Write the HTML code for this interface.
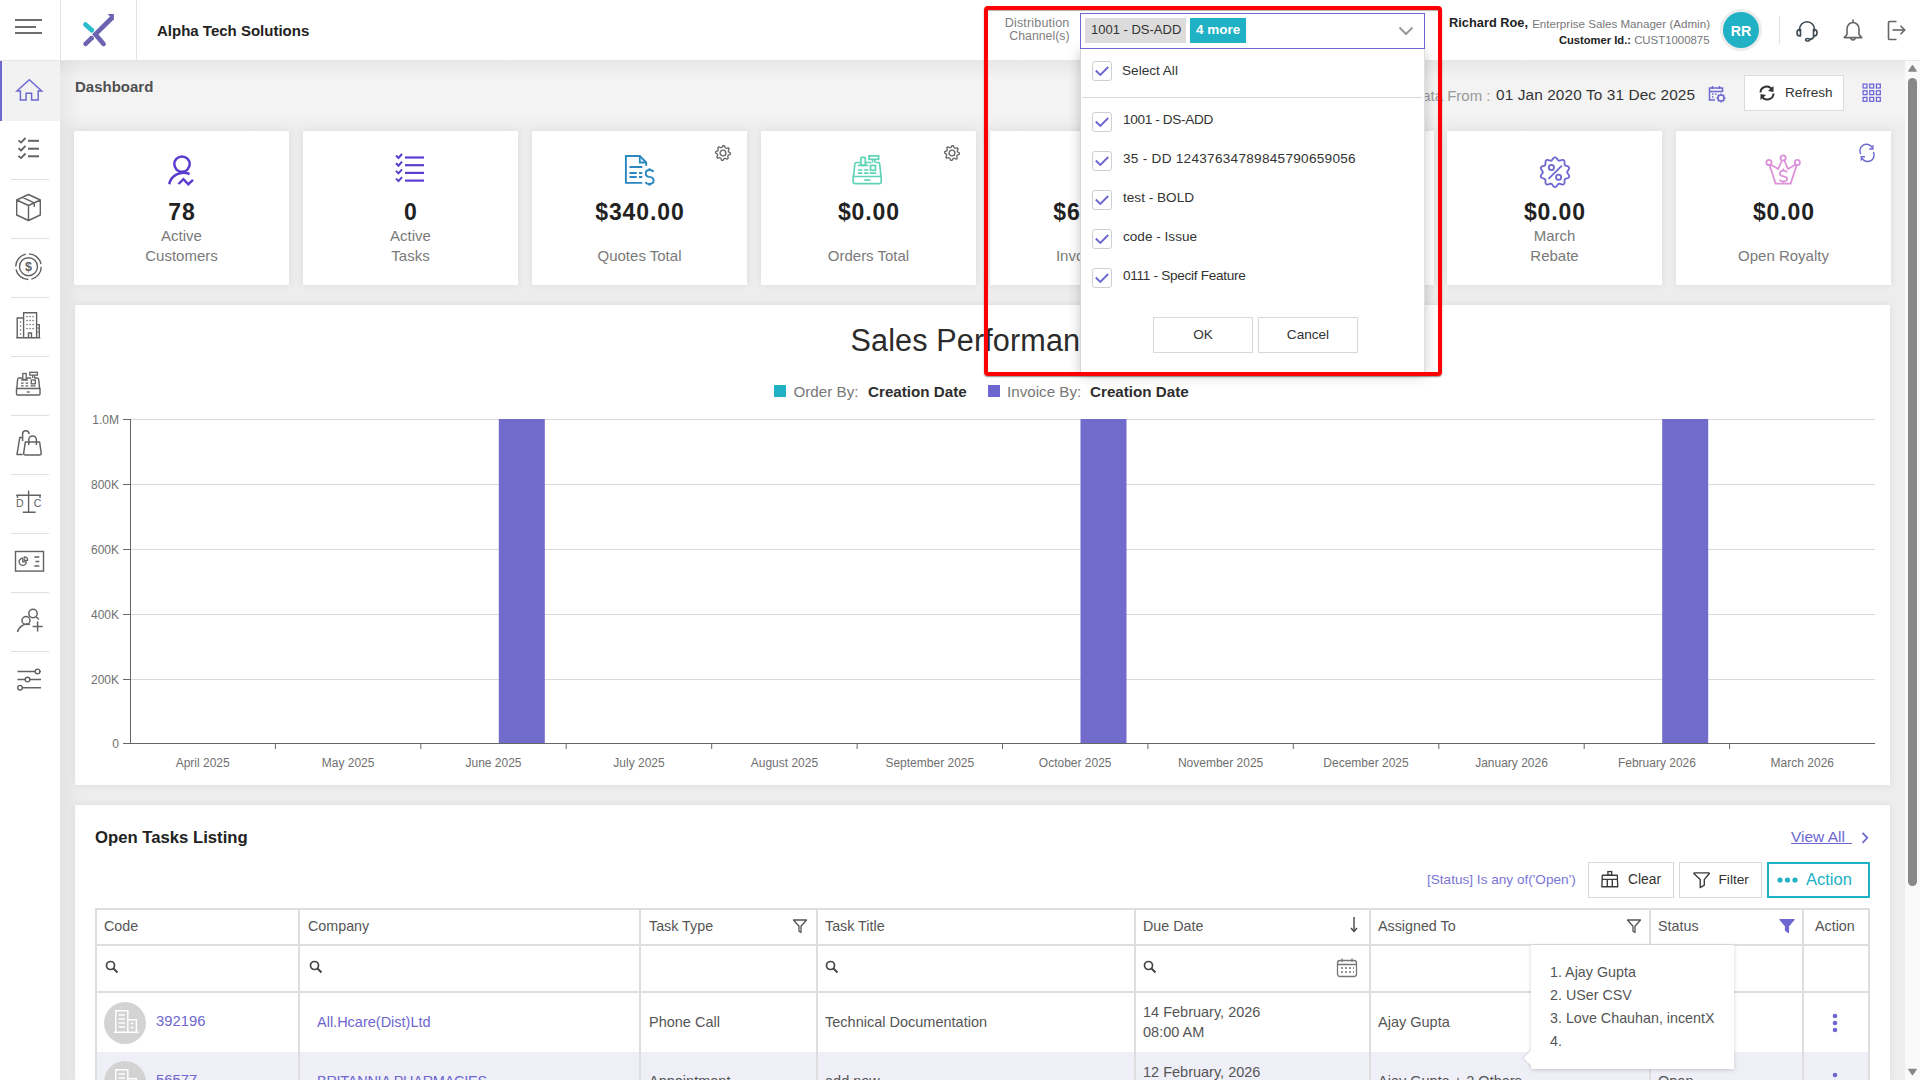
<!DOCTYPE html><html><head><meta charset="utf-8"><style>
html,body{margin:0;padding:0;width:1920px;height:1080px;overflow:hidden;background:#f1f1f1;font-family:"Liberation Sans", sans-serif;}
.t{position:absolute;line-height:1;white-space:nowrap;}
</style></head><body>
<div style="position:absolute;left:61px;top:60px;width:1844px;height:1020px;background:#ededed;"></div>
<div style="position:absolute;left:60px;top:61px;width:1845px;height:70px;background:linear-gradient(#e8e8e8 0px,#f3f3f3 18px,#f3f3f3 52px,#ececec 70px);"></div>
<div style="position:absolute;left:0px;top:0px;width:1920px;height:61px;background:#fff;border-bottom:1px solid #e6e6e6;box-sizing:border-box;"></div>
<div style="position:absolute;left:60px;top:0px;width:1px;height:60px;background:#e4e4e4;"></div>
<div style="position:absolute;left:136px;top:0px;width:1px;height:60px;background:#e4e4e4;"></div>
<div style="position:absolute;left:15px;top:19px;width:27px;height:2px;background:#6e6e6e;"></div>
<div style="position:absolute;left:15px;top:26px;width:21px;height:2px;background:#6e6e6e;"></div>
<div style="position:absolute;left:15px;top:32px;width:27px;height:2px;background:#6e6e6e;"></div>
<svg style="position:absolute;left:80px;top:10px;" width="40" height="40" viewBox="0 0 40 40">
<line x1="5.4" y1="14.5" x2="11.9" y2="20.3" stroke="#2bbccc" stroke-width="4.6" stroke-linecap="round"/>
<line x1="11.9" y1="20.3" x2="12.5" y2="20.8" stroke="#2bbccc" stroke-width="4.6"/>
<line x1="5.6" y1="33.9" x2="11.6" y2="28.2" stroke="#6c63b0" stroke-width="4.6" stroke-linecap="round"/>
<line x1="11.6" y1="28.2" x2="12.4" y2="27.4" stroke="#6c63b0" stroke-width="4.6"/>
<polyline points="23.6,33.9 15.3,24.3 31.3,8.5" fill="none" stroke="#6c63b0" stroke-width="4.6" stroke-linecap="round" stroke-linejoin="miter"/>
<polygon points="27.6,3.9 33.9,3.9 33.9,10.6" fill="#6c63b0"/>
</svg>
<div class="t" style="left:157px;top:22.80px;font-size:15px;color:#222;font-weight:bold;">Alpha Tech Solutions</div>
<div class="t" style="right:392px;text-align:right;top:17.41px;font-size:12.8px;color:#222;font-weight:bold;">Richard Roe,</div>
<div class="t" style="right:210px;text-align:right;top:18.43px;font-size:11.6px;color:#777;font-weight:normal;">Enterprise Sales Manager (Admin)</div>
<div class="t" style="right:289px;text-align:right;top:34.77px;font-size:11.2px;color:#222;font-weight:bold;">Customer Id.:</div>
<div class="t" style="right:210.5px;text-align:right;top:34.60px;font-size:11.4px;color:#777;font-weight:normal;">CUST1000875</div>
<div style="position:absolute;left:1720px;top:9px;width:42px;height:42px;border-radius:50%;background:#ececec;"></div>
<div style="position:absolute;left:1723px;top:12px;width:36px;height:36px;border-radius:50%;background:#21b1c5;"></div>
<div class="t" style="left:1141px;width:1200px;text-align:center;top:23.88px;font-size:14.2px;color:#fff;font-weight:bold;">RR</div>
<div style="position:absolute;left:1779px;top:16px;width:1px;height:28px;background:#e0e0e0;"></div>
<svg style="position:absolute;left:1795px;top:18px;" width="24" height="26" viewBox="0 0 24 26">
<path d="M4.5 13.5 V11.5 A7.5 7.8 0 0 1 19.5 11.5 V13.5" fill="none" stroke="#3d4a52" stroke-width="1.6"/>
<path d="M5.5 11.5 H4.5 A2.5 3.2 0 0 0 4.5 17.9 H5.5 Z" fill="none" stroke="#3d4a52" stroke-width="1.6" stroke-linejoin="round"/>
<path d="M18.5 11.5 H19.5 A2.5 3.2 0 0 1 19.5 17.9 H18.5 Z" fill="none" stroke="#3d4a52" stroke-width="1.6" stroke-linejoin="round"/>
<path d="M19 18 Q18.5 21 14.5 21.6" fill="none" stroke="#3d4a52" stroke-width="1.6"/>
<ellipse cx="12.6" cy="21.8" rx="2" ry="1.3" fill="none" stroke="#3d4a52" stroke-width="1.5"/>
</svg>
<svg style="position:absolute;left:1842px;top:17px;" width="22" height="26" viewBox="0 0 22 26">
<path d="M5 17.5 V12 A6 6.5 0 0 1 17 12 V17.5 L19.8 20.6 H2.2 Z" fill="none" stroke="#666" stroke-width="1.6" stroke-linejoin="round"/>
<path d="M9 21 A2 2 0 0 0 13 21" fill="none" stroke="#666" stroke-width="1.6"/>
<line x1="11" y1="2.5" x2="11" y2="5.5" stroke="#666" stroke-width="1.6"/>
</svg>
<svg style="position:absolute;left:1886px;top:19px;" width="22" height="22" viewBox="0 0 22 22">
<path d="M10.5 2.5 H3.5 Q2.5 2.5 2.5 3.5 V19.5 Q2.5 20.5 3.5 20.5 H10.5" fill="none" stroke="#666" stroke-width="1.6"/>
<line x1="6.5" y1="11" x2="18.5" y2="11" stroke="#666" stroke-width="1.6"/>
<polyline points="14.5,6.8 18.7,11 14.5,15.2" fill="none" stroke="#666" stroke-width="1.6"/>
</svg>
<div style="position:absolute;left:0px;top:61px;width:60px;height:1019px;background:#fff;"></div>
<div style="position:absolute;left:0px;top:61px;width:60px;height:60px;background:#f2f2f2;"></div>
<div style="position:absolute;left:0px;top:61px;width:2px;height:60px;background:#6d67cf;"></div>
<div style="position:absolute;left:11px;top:179px;width:38px;height:1px;background:#e0e0e0;"></div>
<div style="position:absolute;left:11px;top:238px;width:38px;height:1px;background:#e0e0e0;"></div>
<div style="position:absolute;left:11px;top:297px;width:38px;height:1px;background:#e0e0e0;"></div>
<div style="position:absolute;left:11px;top:356px;width:38px;height:1px;background:#e0e0e0;"></div>
<div style="position:absolute;left:11px;top:415px;width:38px;height:1px;background:#e0e0e0;"></div>
<div style="position:absolute;left:11px;top:474px;width:38px;height:1px;background:#e0e0e0;"></div>
<div style="position:absolute;left:11px;top:533px;width:38px;height:1px;background:#e0e0e0;"></div>
<div style="position:absolute;left:11px;top:592px;width:38px;height:1px;background:#e0e0e0;"></div>
<div style="position:absolute;left:11px;top:651px;width:38px;height:1px;background:#e0e0e0;"></div>
<svg style="position:absolute;left:0px;top:60px;" width="60" height="660" viewBox="0 0 60 660"><path d="M16.9 31 L29.3 19.799999999999997 L41.7 31 H38.2 V40 H31.6 V33.3 H26.1 V40 H20.4 V31 Z" fill="none" stroke="#6d67cf" stroke-width="1.45" stroke-linejoin="miter"/><polyline points="18.5,80.30000000000001 21,82.60000000000002 25.5,78.0" fill="none" stroke="#626262" stroke-width="1.8" stroke-linejoin="round"/><line x1="28" y1="80.80000000000001" x2="39" y2="80.80000000000001" stroke="#626262" stroke-width="2"/><polyline points="18.5,88.19999999999999 21,90.5 25.5,85.89999999999998" fill="none" stroke="#626262" stroke-width="1.8" stroke-linejoin="round"/><line x1="28" y1="88.69999999999999" x2="39" y2="88.69999999999999" stroke="#626262" stroke-width="2"/><polyline points="18.5,95.80000000000001 21,98.10000000000002 25.5,93.5" fill="none" stroke="#626262" stroke-width="1.8" stroke-linejoin="round"/><line x1="28" y1="96.30000000000001" x2="39" y2="96.30000000000001" stroke="#626262" stroke-width="2"/><path d="M28.5 134.5 L40.3 140 V155 L28.5 160.5 L16.7 155 V140 Z M16.7 140 L28.5 145.5 L40.3 140 M28.5 145.5 V160.5 M22.5 137.3 L34.3 142.8 V147" fill="none" stroke="#626262" stroke-width="1.4" stroke-linejoin="round"/><circle cx="28.5" cy="206.7" r="12.8" fill="none" stroke="#626262" stroke-width="1.4" stroke-dasharray="17 3.1"/><circle cx="28.5" cy="206.7" r="9" fill="none" stroke="#626262" stroke-width="1.4"/><text x="28.5" y="211.3" font-size="12.5" font-weight="bold" text-anchor="middle" fill="#626262" font-family="Liberation Sans">$</text><path d="M17.2 277.5 V258 H23.6 M23.6 277.5 V252.8 H36.6 V277.5 M36.6 264.6 H39.3 V277.5 M16.2 277.8 H40.3 M28.5 277.5 V273 H31.5 V277.5" fill="none" stroke="#626262" stroke-width="1.4"/><rect x="26.4" y="255.9" width="1.3" height="1.3" fill="#626262"/><rect x="26.4" y="259.9" width="1.3" height="1.3" fill="#626262"/><rect x="26.4" y="263.9" width="1.3" height="1.3" fill="#626262"/><rect x="26.4" y="267.9" width="1.3" height="1.3" fill="#626262"/><rect x="29.4" y="255.9" width="1.3" height="1.3" fill="#626262"/><rect x="29.4" y="259.9" width="1.3" height="1.3" fill="#626262"/><rect x="29.4" y="263.9" width="1.3" height="1.3" fill="#626262"/><rect x="29.4" y="267.9" width="1.3" height="1.3" fill="#626262"/><rect x="32.4" y="255.9" width="1.3" height="1.3" fill="#626262"/><rect x="32.4" y="259.9" width="1.3" height="1.3" fill="#626262"/><rect x="32.4" y="263.9" width="1.3" height="1.3" fill="#626262"/><rect x="32.4" y="267.9" width="1.3" height="1.3" fill="#626262"/><rect x="19.9" y="261.4" width="1.3" height="1.3" fill="#626262"/><rect x="19.9" y="265.4" width="1.3" height="1.3" fill="#626262"/><rect x="19.9" y="269.4" width="1.3" height="1.3" fill="#626262"/><rect x="19.9" y="273.4" width="1.3" height="1.3" fill="#626262"/><rect x="37.4" y="267.4" width="1.3" height="1.3" fill="#626262"/><rect x="37.4" y="271.4" width="1.3" height="1.3" fill="#626262"/><path d="M16.8 328.5 L17.6 319.5 Q17.8 318 19.3 318 H22.5 M26.5 318 H31.2 M34.2 318 H37 Q38.5 318 38.7 319.5 L39.6 328.5" fill="none" stroke="#626262" stroke-width="1.4"/><path d="M16.5 328.5 H40 V333.8 Q40 335 38.8 335 H17.7 Q16.5 335 16.5 333.8 Z" fill="none" stroke="#626262" stroke-width="1.4"/><path d="M26.7 332 H29.8" stroke="#626262" stroke-width="1.3"/><rect x="22.8" y="313.5" width="3.4" height="6" fill="none" stroke="#626262" stroke-width="1.3"/><path d="M21 320 H28" stroke="#626262" stroke-width="1.3"/><rect x="29.8" y="312.3" width="7.6" height="2.8" fill="none" stroke="#626262" stroke-width="1.3"/><path d="M32.6 315 V318 M34.6 315 V318" stroke="#626262" stroke-width="1.2"/><rect x="31.3" y="320" width="4" height="3.8" fill="none" stroke="#626262" stroke-width="1.3"/><path d="M21 323.2 H23.6 M25.6 323.2 H28.2 M21 325.8 H23.6 M25.6 325.8 H28.2 M30.6 325.8 H35.6" stroke="#626262" stroke-width="1.3"/><path d="M22.5 377.5 H19.8 L17 394.5 H22.6" fill="none" stroke="#626262" stroke-width="1.5" stroke-linejoin="round"/><path d="M22.6 381 V374 A3.2 3.2 0 0 1 29 374" fill="none" stroke="#626262" stroke-width="1.5"/><path d="M25.3 382 H39.6 L41.2 393 Q41.4 395 39.4 395 H25.5 Q23.5 395 23.7 393 Z" fill="none" stroke="#626262" stroke-width="1.5" stroke-linejoin="round"/><path d="M28.8 385 V379.8 A3.8 3.8 0 0 1 36.4 379.8 V385" fill="none" stroke="#626262" stroke-width="1.5"/><path d="M28.6 430.5 V452.20000000000005 M22.8 452.20000000000005 H35.6 M16.2 435.3 H41 M17.5 435.3 V438 M40 435.3 V438" fill="none" stroke="#626262" stroke-width="1.4"/><text x="19.8" y="447.3" font-size="10.5" text-anchor="middle" fill="#626262" font-family="Liberation Sans">D</text><text x="37.5" y="447.3" font-size="10.5" text-anchor="middle" fill="#626262" font-family="Liberation Sans">C</text><rect x="15.5" y="491.5" width="28" height="19.6" fill="none" stroke="#626262" stroke-width="1.4"/><path d="M26.3 501.79999999999995 A3.6 3.6 0 1 1 22.7 498.20000000000005 V501.79999999999995 Z" fill="none" stroke="#626262" stroke-width="1.3" stroke-linejoin="round"/><path d="M24.2 496.79999999999995 A3.5 3.5 0 0 1 27.7 500.29999999999995 H24.2 Z" fill="none" stroke="#626262" stroke-width="1.2" stroke-linejoin="round"/><path d="M34.3 497 H39.3 M35.5 501.5 H39.3 M34.3 506 H39.3" stroke="#626262" stroke-width="1.3"/><circle cx="33" cy="553.5" r="4.2" fill="none" stroke="#626262" stroke-width="1.5"/><circle cx="26" cy="560.5" r="4" fill="none" stroke="#626262" stroke-width="1.5"/><path d="M17.5 572 A10 10 0 0 1 30 564.5" fill="none" stroke="#626262" stroke-width="1.5"/><path d="M36 557.2 A6.5 6.5 0 0 1 38.8 559.5" fill="none" stroke="#626262" stroke-width="1.4"/><path d="M37.6 561.5 V571.5 M32.6 566.5 H42.6" stroke="#626262" stroke-width="1.5"/><path d="M17.5 611.4 H35.2 M17.5 619.6 H25.2 M29.8 619.6 H41 M22.3 627.7 H41" stroke="#626262" stroke-width="1.5"/><circle cx="37.5" cy="611.4" r="2.3" fill="none" stroke="#626262" stroke-width="1.4"/><circle cx="27.5" cy="619.6" r="2.3" fill="none" stroke="#626262" stroke-width="1.4"/><circle cx="20" cy="627.7" r="2.3" fill="none" stroke="#626262" stroke-width="1.4"/><path d="M39.8 611.4 H41" stroke="#626262" stroke-width="1.5"/></svg>
<div class="t" style="left:75px;top:79.30px;font-size:15px;color:#505050;font-weight:bold;">Dashboard</div>
<div class="t" style="right:429.5px;text-align:right;top:87.60px;font-size:15px;color:#999;font-weight:normal;">Data From :</div>
<div class="t" style="left:1496px;top:87.26px;font-size:15.4px;color:#333;font-weight:normal;letter-spacing:0.1px;">01 Jan 2020 To 31 Dec 2025</div>
<svg style="position:absolute;left:1707px;top:84px;" width="20" height="20" viewBox="0 0 20 20">
<path d="M8 16 H2.5 V4 H15.5 V8" fill="none" stroke="#6d67cf" stroke-width="1.5"/>
<path d="M2.5 7.5 H15.5" stroke="#6d67cf" stroke-width="1.5"/>
<path d="M5.5 2 V5 M12.5 2 V5" stroke="#6d67cf" stroke-width="1.5"/>
<path d="M5 10 h1.5 M8 10 h1.5 M5 13 h1.5" stroke="#6d67cf" stroke-width="1.3"/>
<circle cx="14" cy="14" r="3" fill="none" stroke="#6d67cf" stroke-width="1.5"/>
<path d="M14 9.5 V11 M14 17 V18.5 M9.5 14 H11 M17 14 H18.5 M10.8 10.8 L11.8 11.8 M16.2 16.2 L17.2 17.2 M10.8 17.2 L11.8 16.2 M16.2 11.8 L17.2 10.8" stroke="#6d67cf" stroke-width="1.5"/>
</svg>
<div style="position:absolute;left:1744px;top:75px;width:100px;height:36px;background:#fff;border:1px solid #dcdcdc;box-sizing:border-box;"></div>
<svg style="position:absolute;left:1758px;top:85px;" width="18" height="16" viewBox="0 0 18 16">
<path d="M2.5 7.5 A6.2 6.2 0 0 1 14 4.5" fill="none" stroke="#333" stroke-width="2"/>
<polygon points="15.5,1 15.5,7 10,6" fill="#333"/>
<path d="M15.5 8.5 A6.2 6.2 0 0 1 4 11.5" fill="none" stroke="#333" stroke-width="2"/>
<polygon points="2.5,15 2.5,9 8,10" fill="#333"/>
</svg>
<div class="t" style="left:1785px;top:85.99px;font-size:13.6px;color:#333;font-weight:normal;">Refresh</div>
<svg style="position:absolute;left:1862.4px;top:83.4px;" width="20" height="20" viewBox="0 0 20 20"><rect x="1.1" y="1.1" width="3.9" height="3.9" fill="none" stroke="#6a64d8" stroke-width="1.25"/><rect x="7.75" y="1.1" width="3.9" height="3.9" fill="none" stroke="#6a64d8" stroke-width="1.25"/><rect x="14.4" y="1.1" width="3.9" height="3.9" fill="none" stroke="#6a64d8" stroke-width="1.25"/><rect x="1.1" y="7.75" width="3.9" height="3.9" fill="none" stroke="#6a64d8" stroke-width="1.25"/><rect x="7.75" y="7.75" width="3.9" height="3.9" fill="none" stroke="#6a64d8" stroke-width="1.25"/><rect x="14.4" y="7.75" width="3.9" height="3.9" fill="none" stroke="#6a64d8" stroke-width="1.25"/><rect x="1.1" y="14.4" width="3.9" height="3.9" fill="none" stroke="#6a64d8" stroke-width="1.25"/><rect x="7.75" y="14.4" width="3.9" height="3.9" fill="none" stroke="#6a64d8" stroke-width="1.25"/><rect x="14.4" y="14.4" width="3.9" height="3.9" fill="none" stroke="#6a64d8" stroke-width="1.25"/></svg>
<div style="position:absolute;left:74px;top:131px;width:215px;height:154px;background:#fff;box-shadow:0 0 7px rgba(0,0,0,0.07);"></div>
<div style="position:absolute;left:303px;top:131px;width:215px;height:154px;background:#fff;box-shadow:0 0 7px rgba(0,0,0,0.07);"></div>
<div style="position:absolute;left:532px;top:131px;width:215px;height:154px;background:#fff;box-shadow:0 0 7px rgba(0,0,0,0.07);"></div>
<div style="position:absolute;left:761px;top:131px;width:215px;height:154px;background:#fff;box-shadow:0 0 7px rgba(0,0,0,0.07);"></div>
<div style="position:absolute;left:990px;top:131px;width:215px;height:154px;background:#fff;box-shadow:0 0 7px rgba(0,0,0,0.07);"></div>
<div style="position:absolute;left:1219px;top:131px;width:215px;height:154px;background:#fff;box-shadow:0 0 7px rgba(0,0,0,0.07);"></div>
<div style="position:absolute;left:1447px;top:131px;width:215px;height:154px;background:#fff;box-shadow:0 0 7px rgba(0,0,0,0.07);"></div>
<div style="position:absolute;left:1676px;top:131px;width:215px;height:154px;background:#fff;box-shadow:0 0 7px rgba(0,0,0,0.07);"></div>
<div class="t" style="left:-418.05px;width:1200px;text-align:center;top:200.53px;font-size:23px;color:#222;font-weight:bold;letter-spacing:0.9px;">78</div>
<div class="t" style="left:-418.5px;width:1200px;text-align:center;top:227.90px;font-size:15px;color:#7a7a7a;font-weight:normal;">Active</div>
<div class="t" style="left:-418.5px;width:1200px;text-align:center;top:247.90px;font-size:15px;color:#7a7a7a;font-weight:normal;">Customers</div>
<div class="t" style="left:-189.05px;width:1200px;text-align:center;top:200.53px;font-size:23px;color:#222;font-weight:bold;letter-spacing:0.9px;">0</div>
<div class="t" style="left:-189.5px;width:1200px;text-align:center;top:227.90px;font-size:15px;color:#7a7a7a;font-weight:normal;">Active</div>
<div class="t" style="left:-189.5px;width:1200px;text-align:center;top:247.90px;font-size:15px;color:#7a7a7a;font-weight:normal;">Tasks</div>
<div class="t" style="left:39.950000000000045px;width:1200px;text-align:center;top:200.53px;font-size:23px;color:#222;font-weight:bold;letter-spacing:0.9px;">$340.00</div>
<div class="t" style="left:39.5px;width:1200px;text-align:center;top:248.10px;font-size:15px;color:#7a7a7a;font-weight:normal;">Quotes Total</div>
<div class="t" style="left:268.95000000000005px;width:1200px;text-align:center;top:200.53px;font-size:23px;color:#222;font-weight:bold;letter-spacing:0.9px;">$0.00</div>
<div class="t" style="left:268.5px;width:1200px;text-align:center;top:248.10px;font-size:15px;color:#7a7a7a;font-weight:normal;">Orders Total</div>
<div class="t" style="left:497.95000000000005px;width:1200px;text-align:center;top:200.53px;font-size:23px;color:#222;font-weight:bold;letter-spacing:0.9px;">$670.00</div>
<div class="t" style="left:497.5px;width:1200px;text-align:center;top:248.10px;font-size:15px;color:#7a7a7a;font-weight:normal;">Invoice Total</div>
<div class="t" style="left:726.95px;width:1200px;text-align:center;top:200.53px;font-size:23px;color:#222;font-weight:bold;letter-spacing:0.9px;">$0.00</div>
<div class="t" style="left:726.5px;width:1200px;text-align:center;top:248.10px;font-size:15px;color:#7a7a7a;font-weight:normal;">Credit Total</div>
<div class="t" style="left:954.95px;width:1200px;text-align:center;top:200.53px;font-size:23px;color:#222;font-weight:bold;letter-spacing:0.9px;">$0.00</div>
<div class="t" style="left:954.5px;width:1200px;text-align:center;top:227.90px;font-size:15px;color:#7a7a7a;font-weight:normal;">March</div>
<div class="t" style="left:954.5px;width:1200px;text-align:center;top:247.90px;font-size:15px;color:#7a7a7a;font-weight:normal;">Rebate</div>
<div class="t" style="left:1183.95px;width:1200px;text-align:center;top:200.53px;font-size:23px;color:#222;font-weight:bold;letter-spacing:0.9px;">$0.00</div>
<div class="t" style="left:1183.5px;width:1200px;text-align:center;top:248.10px;font-size:15px;color:#7a7a7a;font-weight:normal;">Open Royalty</div>
<svg style="position:absolute;left:167px;top:154px;" width="32" height="34" viewBox="0 0 32 34">
<circle cx="15" cy="10.1" r="7.7" fill="none" stroke="#5a3ccf" stroke-width="2.5"/>
<path d="M2.3 30.3 A14.5 13.5 0 0 1 22.6 20" fill="none" stroke="#5a3ccf" stroke-width="2.5"/>
<polyline points="11.5,30 16.4,25.2 21.3,30.2 26,25.8" fill="none" stroke="#5a3ccf" stroke-width="2.4" stroke-linejoin="miter"/>
</svg>
<svg style="position:absolute;left:394.2px;top:153.3px;" width="32" height="32" viewBox="0 0 32 32"><polyline points="2,2.5 4.5,5.0 8,1.0" fill="none" stroke="#5a3ccf" stroke-width="2"/><line x1="11" y1="4.5" x2="30" y2="4.5" stroke="#5a3ccf" stroke-width="2.2"/><polyline points="2,10.2 4.5,12.7 8,8.7" fill="none" stroke="#5a3ccf" stroke-width="2"/><line x1="11" y1="12.2" x2="30" y2="12.2" stroke="#5a3ccf" stroke-width="2.2"/><polyline points="2,17.9 4.5,20.4 8,16.4" fill="none" stroke="#5a3ccf" stroke-width="2"/><line x1="11" y1="19.9" x2="30" y2="19.9" stroke="#5a3ccf" stroke-width="2.2"/><polyline points="2,25.6 4.5,28.1 8,24.1" fill="none" stroke="#5a3ccf" stroke-width="2"/><line x1="11" y1="27.6" x2="30" y2="27.6" stroke="#5a3ccf" stroke-width="2.2"/></svg>
<svg style="position:absolute;left:620px;top:150px;" width="40" height="40" viewBox="0 0 40 40">
<path d="M22.3 32.9 H5.9 V6 H19.8 L26.2 12.5 V15.7" fill="none" stroke="#2a87c0" stroke-width="1.9" stroke-linejoin="miter"/>
<path d="M19.8 6 V12.5 H26.2" fill="none" stroke="#2a87c0" stroke-width="1.8"/>
<path d="M9.5 17 H22.3 M9.5 23 H16.7 M19 23 H22.3 M9.5 27 H16.7 M19 27 H22.3" stroke="#2a87c0" stroke-width="1.8"/>
<path d="M29.5 18.3 V20 M29.5 34 V35.8" stroke="#2a87c0" stroke-width="1.9"/>
<path d="M33.3 21.8 Q32.6 20 29.5 20 Q25.7 20 25.7 23.4 Q25.7 26.3 29.5 26.9 Q33.6 27.4 33.6 30.6 Q33.6 34 29.5 34 Q26.2 34 25.4 32.2" fill="none" stroke="#2a87c0" stroke-width="1.9"/>
</svg>
<svg style="position:absolute;left:840px;top:145px;" width="60" height="50" viewBox="0 0 60 50">
<path d="M13.6 31.5 L14.8 19 Q15 17.5 16.5 17.5 H20.6 M25.6 17.5 H31.5 M35.5 17.5 H38 Q39.5 17.5 39.7 19 L41 31.5" fill="none" stroke="#5fd3b6" stroke-width="1.7"/>
<path d="M13.2 31.5 H41.2 V37 Q41.2 38.6 39.6 38.6 H14.8 Q13.2 38.6 13.2 37 Z" fill="none" stroke="#5fd3b6" stroke-width="1.7"/>
<path d="M25 35.2 H29.6" stroke="#5fd3b6" stroke-width="1.7" stroke-linecap="round"/>
<rect x="20.9" y="12.3" width="4.4" height="8" rx="0.8" fill="none" stroke="#5fd3b6" stroke-width="1.7"/>
<path d="M18.7 20.4 H27.6" stroke="#5fd3b6" stroke-width="1.7" stroke-linecap="round"/>
<rect x="29" y="10.9" width="9.6" height="3.4" fill="none" stroke="#5fd3b6" stroke-width="1.7"/>
<path d="M32.6 14.3 V17.5 M34.8 14.3 V17.5" stroke="#5fd3b6" stroke-width="1.5"/>
<rect x="30.5" y="20.5" width="5" height="4.8" fill="none" stroke="#5fd3b6" stroke-width="1.7"/>
<path d="M18.6 25 H21.8 M24.6 25 H27.8 M18.6 28.1 H21.8 M24.6 28.1 H27.8 M30.2 28.1 H35.6" stroke="#5fd3b6" stroke-width="1.7" stroke-linecap="round"/>
</svg>
<svg style="position:absolute;left:714.3px;top:144px;" width="18" height="18" viewBox="0 0 18 18"><polygon points="16.40,9.00 16.26,10.44 14.27,11.18 13.74,12.17 14.23,14.23 13.11,15.15 11.18,14.27 10.11,14.59 9.00,16.40 7.56,16.26 6.82,14.27 5.83,13.74 3.77,14.23 2.85,13.11 3.73,11.18 3.41,10.11 1.60,9.00 1.74,7.56 3.73,6.82 4.26,5.83 3.77,3.77 4.89,2.85 6.82,3.73 7.89,3.41 9.00,1.60 10.44,1.74 11.18,3.73 12.17,4.26 14.23,3.77 15.15,4.89 14.27,6.82 14.59,7.89" fill="none" stroke="#666" stroke-width="1.3" stroke-linejoin="round"/><circle cx="9" cy="9" r="2.9" fill="none" stroke="#666" stroke-width="1.4"/></svg>
<svg style="position:absolute;left:943.3px;top:144px;" width="18" height="18" viewBox="0 0 18 18"><polygon points="16.40,9.00 16.26,10.44 14.27,11.18 13.74,12.17 14.23,14.23 13.11,15.15 11.18,14.27 10.11,14.59 9.00,16.40 7.56,16.26 6.82,14.27 5.83,13.74 3.77,14.23 2.85,13.11 3.73,11.18 3.41,10.11 1.60,9.00 1.74,7.56 3.73,6.82 4.26,5.83 3.77,3.77 4.89,2.85 6.82,3.73 7.89,3.41 9.00,1.60 10.44,1.74 11.18,3.73 12.17,4.26 14.23,3.77 15.15,4.89 14.27,6.82 14.59,7.89" fill="none" stroke="#666" stroke-width="1.3" stroke-linejoin="round"/><circle cx="9" cy="9" r="2.9" fill="none" stroke="#666" stroke-width="1.4"/></svg>
<svg style="position:absolute;left:1530px;top:150px;" width="50" height="45" viewBox="0 0 50 45">
<polygon points="25.00,7.35 25.52,7.44 26.01,7.70 26.48,8.10 26.91,8.60 27.30,9.14 27.67,9.66 28.02,10.10 28.37,10.44 28.75,10.64 29.18,10.71 29.67,10.64 30.22,10.48 30.82,10.28 31.45,10.07 32.09,9.92 32.70,9.87 33.26,9.96 33.73,10.19 34.09,10.56 34.34,11.07 34.48,11.67 34.54,12.32 34.54,12.98 34.53,13.62 34.55,14.19 34.64,14.67 34.83,15.06 35.14,15.36 35.57,15.59 36.11,15.79 36.71,15.97 37.34,16.18 37.95,16.43 38.48,16.76 38.88,17.15 39.12,17.61 39.20,18.13 39.10,18.68 38.87,19.25 38.53,19.82 38.14,20.35 37.75,20.86 37.44,21.33 37.22,21.77 37.15,22.20 37.22,22.63 37.44,23.07 37.75,23.54 38.14,24.05 38.53,24.58 38.87,25.15 39.10,25.72 39.20,26.27 39.12,26.79 38.88,27.25 38.48,27.64 37.95,27.97 37.34,28.22 36.71,28.43 36.11,28.61 35.57,28.81 35.14,29.04 34.83,29.34 34.64,29.73 34.55,30.21 34.53,30.78 34.54,31.42 34.54,32.08 34.48,32.73 34.34,33.33 34.09,33.84 33.73,34.21 33.26,34.44 32.70,34.53 32.09,34.48 31.45,34.33 30.82,34.12 30.22,33.92 29.67,33.76 29.18,33.69 28.75,33.76 28.37,33.96 28.02,34.30 27.67,34.74 27.30,35.26 26.91,35.80 26.48,36.30 26.01,36.70 25.52,36.96 25.00,37.05 24.48,36.96 23.99,36.70 23.52,36.30 23.09,35.80 22.70,35.26 22.33,34.74 21.98,34.30 21.63,33.96 21.25,33.76 20.82,33.69 20.33,33.76 19.78,33.92 19.18,34.12 18.55,34.33 17.91,34.48 17.30,34.53 16.74,34.44 16.27,34.21 15.91,33.84 15.66,33.33 15.52,32.73 15.46,32.08 15.46,31.42 15.47,30.78 15.45,30.21 15.36,29.73 15.17,29.34 14.86,29.04 14.43,28.81 13.89,28.61 13.29,28.43 12.66,28.22 12.05,27.97 11.52,27.64 11.12,27.25 10.88,26.79 10.80,26.27 10.90,25.72 11.13,25.15 11.47,24.58 11.86,24.05 12.25,23.54 12.56,23.07 12.78,22.63 12.85,22.20 12.78,21.77 12.56,21.33 12.25,20.86 11.86,20.35 11.47,19.82 11.13,19.25 10.90,18.68 10.80,18.13 10.88,17.61 11.12,17.15 11.52,16.76 12.05,16.43 12.66,16.18 13.29,15.97 13.89,15.79 14.43,15.59 14.86,15.36 15.17,15.06 15.36,14.67 15.45,14.19 15.47,13.62 15.46,12.98 15.46,12.32 15.52,11.67 15.66,11.07 15.91,10.56 16.27,10.19 16.74,9.96 17.30,9.87 17.91,9.92 18.55,10.07 19.18,10.28 19.78,10.48 20.33,10.64 20.82,10.71 21.25,10.64 21.63,10.44 21.98,10.10 22.33,9.66 22.70,9.14 23.09,8.60 23.52,8.10 23.99,7.70 24.48,7.44" fill="none" stroke="#6d67cf" stroke-width="1.8" stroke-linejoin="round"/>
<circle cx="21.4" cy="17.5" r="2.6" fill="none" stroke="#6d67cf" stroke-width="1.8"/>
<circle cx="28.6" cy="27.2" r="2.6" fill="none" stroke="#6d67cf" stroke-width="1.8"/>
<line x1="19" y1="28.3" x2="31.4" y2="16.1" stroke="#6d67cf" stroke-width="1.8" stroke-linecap="round"/>
</svg>
<svg style="position:absolute;left:1755px;top:135px;" width="130" height="60" viewBox="0 0 130 60">
<circle cx="13.9" cy="27.4" r="2.6" fill="none" stroke="#dc92d9" stroke-width="1.8"/>
<circle cx="28.1" cy="23" r="2.6" fill="none" stroke="#dc92d9" stroke-width="1.8"/>
<circle cx="42.3" cy="27.4" r="2.6" fill="none" stroke="#dc92d9" stroke-width="1.8"/>
<path d="M15.6 29.4 L23.2 34 L26.9 25.5 M29.3 25.5 L33 34 L40.6 29.4" fill="none" stroke="#dc92d9" stroke-width="1.8" stroke-linejoin="round"/>
<path d="M14.5 30 L20.6 48.6 H35.6 L41.7 30" fill="none" stroke="#dc92d9" stroke-width="1.8" stroke-linejoin="round"/>
<path d="M28.4 33.6 V35.6 M28.4 46 V48" stroke="#dc92d9" stroke-width="1.6"/>
<path d="M32 37.6 Q31.4 35.7 28.4 35.7 Q24.8 35.7 24.8 38.6 Q24.8 40.9 28.4 41.3 Q32.2 41.7 32.2 44.2 Q32.2 46.4 28.4 46.4 Q25.4 46.4 24.6 44.6" fill="none" stroke="#dc92d9" stroke-width="1.7"/>
<path d="M105.8 19.2 A6.4 6.4 0 0 1 117.2 12.6" fill="none" stroke="#6d67cf" stroke-width="1.4"/>
<path d="M117.9 10.3 V14 H114.2" fill="none" stroke="#6d67cf" stroke-width="1.4"/>
<path d="M118.3 16.8 A6.4 6.4 0 0 1 107 23.2" fill="none" stroke="#6d67cf" stroke-width="1.4"/>
<path d="M106.3 25.5 V21.8 H110" fill="none" stroke="#6d67cf" stroke-width="1.4"/>
</svg>
<div style="position:absolute;left:75px;top:305px;width:1815px;height:480px;background:#fff;box-shadow:0 0 7px rgba(0,0,0,0.07);"></div>
<div class="t" style="left:850.5px;top:324.60px;font-size:30.6px;color:#2b2b2b;font-weight:normal;letter-spacing:0.12px;">Sales Performance</div>
<div style="position:absolute;left:774px;top:385px;width:12px;height:12px;background:#21b1c5;"></div>
<div class="t" style="left:793.5px;top:384.13px;font-size:15.2px;color:#777;font-weight:normal;">Order By:</div>
<div class="t" style="left:868px;top:384.13px;font-size:15.2px;color:#2e2e2e;font-weight:bold;">Creation Date</div>
<div style="position:absolute;left:988px;top:385px;width:12px;height:12px;background:#6d67cf;"></div>
<div class="t" style="left:1007px;top:384.13px;font-size:15.2px;color:#777;font-weight:normal;">Invoice By:</div>
<div class="t" style="left:1090px;top:384.13px;font-size:15.2px;color:#2e2e2e;font-weight:bold;">Creation Date</div>
<svg style="position:absolute;left:0px;top:0px;pointer-events:none;" width="1920" height="1080" viewBox="0 0 1920 1080"><line x1="131" y1="419.5" x2="1875" y2="419.5" stroke="#d9d9d9" stroke-width="1"/><line x1="123" y1="419.5" x2="130" y2="419.5" stroke="#666" stroke-width="1"/><text x="119" y="424.0" font-size="12" text-anchor="end" fill="#707070" font-family="Liberation Sans">1.0M</text><line x1="131" y1="484.5" x2="1875" y2="484.5" stroke="#d9d9d9" stroke-width="1"/><line x1="123" y1="484.5" x2="130" y2="484.5" stroke="#666" stroke-width="1"/><text x="119" y="489.0" font-size="12" text-anchor="end" fill="#707070" font-family="Liberation Sans">800K</text><line x1="131" y1="549.5" x2="1875" y2="549.5" stroke="#d9d9d9" stroke-width="1"/><line x1="123" y1="549.5" x2="130" y2="549.5" stroke="#666" stroke-width="1"/><text x="119" y="554.0" font-size="12" text-anchor="end" fill="#707070" font-family="Liberation Sans">600K</text><line x1="131" y1="614.5" x2="1875" y2="614.5" stroke="#d9d9d9" stroke-width="1"/><line x1="123" y1="614.5" x2="130" y2="614.5" stroke="#666" stroke-width="1"/><text x="119" y="619.0" font-size="12" text-anchor="end" fill="#707070" font-family="Liberation Sans">400K</text><line x1="131" y1="679.5" x2="1875" y2="679.5" stroke="#d9d9d9" stroke-width="1"/><line x1="123" y1="679.5" x2="130" y2="679.5" stroke="#666" stroke-width="1"/><text x="119" y="684.0" font-size="12" text-anchor="end" fill="#707070" font-family="Liberation Sans">200K</text><text x="119" y="748" font-size="12" text-anchor="end" fill="#707070" font-family="Liberation Sans">0</text><line x1="123" y1="743.5" x2="130" y2="743.5" stroke="#666" stroke-width="1"/><text x="202.7" y="767" font-size="12" text-anchor="middle" fill="#707070" font-family="Liberation Sans">April 2025</text><line x1="275.4" y1="743.5" x2="275.4" y2="749" stroke="#666" stroke-width="1"/><text x="348.1" y="767" font-size="12" text-anchor="middle" fill="#707070" font-family="Liberation Sans">May 2025</text><line x1="420.8" y1="743.5" x2="420.8" y2="749" stroke="#666" stroke-width="1"/><text x="493.5" y="767" font-size="12" text-anchor="middle" fill="#707070" font-family="Liberation Sans">June 2025</text><line x1="566.2" y1="743.5" x2="566.2" y2="749" stroke="#666" stroke-width="1"/><text x="639.0" y="767" font-size="12" text-anchor="middle" fill="#707070" font-family="Liberation Sans">July 2025</text><line x1="711.7" y1="743.5" x2="711.7" y2="749" stroke="#666" stroke-width="1"/><text x="784.4" y="767" font-size="12" text-anchor="middle" fill="#707070" font-family="Liberation Sans">August 2025</text><line x1="857.1" y1="743.5" x2="857.1" y2="749" stroke="#666" stroke-width="1"/><text x="929.8" y="767" font-size="12" text-anchor="middle" fill="#707070" font-family="Liberation Sans">September 2025</text><line x1="1002.5" y1="743.5" x2="1002.5" y2="749" stroke="#666" stroke-width="1"/><text x="1075.2" y="767" font-size="12" text-anchor="middle" fill="#707070" font-family="Liberation Sans">October 2025</text><line x1="1147.9" y1="743.5" x2="1147.9" y2="749" stroke="#666" stroke-width="1"/><text x="1220.6" y="767" font-size="12" text-anchor="middle" fill="#707070" font-family="Liberation Sans">November 2025</text><line x1="1293.3" y1="743.5" x2="1293.3" y2="749" stroke="#666" stroke-width="1"/><text x="1366.0" y="767" font-size="12" text-anchor="middle" fill="#707070" font-family="Liberation Sans">December 2025</text><line x1="1438.8" y1="743.5" x2="1438.8" y2="749" stroke="#666" stroke-width="1"/><text x="1511.5" y="767" font-size="12" text-anchor="middle" fill="#707070" font-family="Liberation Sans">January 2026</text><line x1="1584.2" y1="743.5" x2="1584.2" y2="749" stroke="#666" stroke-width="1"/><text x="1656.9" y="767" font-size="12" text-anchor="middle" fill="#707070" font-family="Liberation Sans">February 2026</text><line x1="1729.6" y1="743.5" x2="1729.6" y2="749" stroke="#666" stroke-width="1"/><text x="1802.3" y="767" font-size="12" text-anchor="middle" fill="#707070" font-family="Liberation Sans">March 2026</text><rect x="498.8" y="419" width="46" height="324.5" fill="#716bcb"/><rect x="1080.5" y="419" width="46" height="324.5" fill="#716bcb"/><rect x="1662.2" y="419" width="46" height="324.5" fill="#716bcb"/><line x1="130.5" y1="419" x2="130.5" y2="744" stroke="#666" stroke-width="1"/><line x1="130" y1="743.5" x2="1875" y2="743.5" stroke="#666" stroke-width="1"/></svg>
<div style="position:absolute;left:75px;top:805px;width:1815px;height:275px;background:#fff;box-shadow:0 0 7px rgba(0,0,0,0.07);"></div>
<div class="t" style="left:95px;top:830.16px;font-size:16.7px;color:#222;font-weight:bold;">Open Tasks Listing</div>
<div class="t" style="left:1791px;top:828.68px;font-size:15.5px;color:#6d67cf;font-weight:normal;">View All</div>
<div style="position:absolute;left:1791px;top:842.5px;width:61px;height:1.2px;background:#6d67cf;"></div>
<svg style="position:absolute;left:1859.5px;top:830.5px;" width="10" height="14" viewBox="0 0 10 14"><polyline points="2.5,1.8 7.3,6.8 2.5,11.8" fill="none" stroke="#6d67cf" stroke-width="1.7"/></svg>
<div class="t" style="left:1427px;top:872.79px;font-size:13.6px;color:#7b75d6;font-weight:normal;">[Status] Is any of('Open')</div>
<div style="position:absolute;left:1588px;top:862px;width:86px;height:36px;background:#fff;border:1px solid #d8d8d8;box-sizing:border-box;"></div>
<svg style="position:absolute;left:1600px;top:870px;" width="20" height="20" viewBox="0 0 20 20">
<rect x="7.9" y="1.6" width="3.8" height="3.6" fill="none" stroke="#3a3a3a" stroke-width="1.35"/>
<rect x="2.2" y="5.2" width="15.2" height="4.1" rx="0.5" fill="none" stroke="#3a3a3a" stroke-width="1.35"/>
<path d="M2.2 9.3 L1.8 16.7 H17.8 L17.4 9.3 M7.3 9.3 V16.7 M12.3 9.3 V16.7" fill="none" stroke="#3a3a3a" stroke-width="1.35" stroke-linejoin="round"/>
</svg>
<div class="t" style="left:1628px;top:872.82px;font-size:13.8px;color:#333;font-weight:normal;">Clear</div>
<div style="position:absolute;left:1679px;top:862px;width:83px;height:36px;background:#fff;border:1px solid #d8d8d8;box-sizing:border-box;"></div>
<svg style="position:absolute;left:1692px;top:871px;" width="20" height="20" viewBox="0 0 20 20">
<path d="M2.4 1.9 H16.8 Q17.8 1.9 17.1 2.8 L12.3 8.6 V14.2 L8.2 16.6 V8.6 L2.1 2.8 Q1.4 1.9 2.4 1.9 Z" fill="none" stroke="#3a3a3a" stroke-width="1.35" stroke-linejoin="round"/>
</svg>
<div class="t" style="left:1718.5px;top:872.90px;font-size:13.7px;color:#333;font-weight:normal;">Filter</div>
<div style="position:absolute;left:1767px;top:862px;width:103px;height:36px;background:#fff;border:2px solid #21b1c5;box-sizing:border-box;"></div>
<svg style="position:absolute;left:1777px;top:874px;" width="22" height="12" viewBox="0 0 22 12"><circle cx="3" cy="6" r="2.6" fill="#21b1c5"/><circle cx="10.5" cy="6" r="2.6" fill="#21b1c5"/><circle cx="18" cy="6" r="2.6" fill="#21b1c5"/></svg>
<div class="t" style="left:1806px;top:871.33px;font-size:16.5px;color:#21b1c5;font-weight:normal;">Action</div>
<div style="position:absolute;left:95px;top:908px;width:1775px;height:172px;background:#fff;border:2px solid #dedede;border-bottom:none;box-sizing:border-box;"></div>
<div style="position:absolute;left:97px;top:1052px;width:1771px;height:28px;background:#efeff8;"></div>
<div style="position:absolute;left:97px;top:944px;width:1771px;height:2px;background:#dedede;"></div>
<div style="position:absolute;left:97px;top:991px;width:1771px;height:2px;background:#dedede;"></div>
<div style="position:absolute;left:298px;top:910px;width:2px;height:170px;background:#dedede;"></div>
<div style="position:absolute;left:639px;top:910px;width:2px;height:170px;background:#dedede;"></div>
<div style="position:absolute;left:816px;top:910px;width:2px;height:170px;background:#dedede;"></div>
<div style="position:absolute;left:1134px;top:910px;width:2px;height:170px;background:#dedede;"></div>
<div style="position:absolute;left:1369px;top:910px;width:2px;height:170px;background:#dedede;"></div>
<div style="position:absolute;left:1649px;top:910px;width:2px;height:170px;background:#dedede;"></div>
<div style="position:absolute;left:1802px;top:910px;width:2px;height:170px;background:#dedede;"></div>
<div class="t" style="left:104px;top:919.40px;font-size:14.3px;color:#555;font-weight:normal;">Code</div>
<div class="t" style="left:308px;top:919.40px;font-size:14.3px;color:#555;font-weight:normal;">Company</div>
<div class="t" style="left:649px;top:919.40px;font-size:14.3px;color:#555;font-weight:normal;">Task Type</div>
<div class="t" style="left:825px;top:919.40px;font-size:14.3px;color:#555;font-weight:normal;">Task Title</div>
<div class="t" style="left:1143px;top:919.40px;font-size:14.3px;color:#555;font-weight:normal;">Due Date</div>
<div class="t" style="left:1378px;top:919.40px;font-size:14.3px;color:#555;font-weight:normal;">Assigned To</div>
<div class="t" style="left:1658px;top:919.40px;font-size:14.3px;color:#555;font-weight:normal;">Status</div>
<div class="t" style="left:1815px;top:919.40px;font-size:14.3px;color:#555;font-weight:normal;">Action</div>
<svg style="position:absolute;left:792px;top:918px;" width="16" height="16" viewBox="0 0 16 16"><path d="M1.5 2 H14.5 L9 8.3 V14.5 L7 13.3 V8.3 Z" fill="none" stroke="#555" stroke-width="1.3" stroke-linejoin="round"/></svg>
<svg style="position:absolute;left:1626px;top:918px;" width="16" height="16" viewBox="0 0 16 16"><path d="M1.5 2 H14.5 L9 8.3 V14.5 L7 13.3 V8.3 Z" fill="none" stroke="#555" stroke-width="1.3" stroke-linejoin="round"/></svg>
<svg style="position:absolute;left:1779px;top:918px;" width="16" height="16" viewBox="0 0 16 16"><path d="M1 1.5 H15 L9.5 8 V14.5 L6.5 12.5 V8 Z" fill="#6d67cf" stroke="#6d67cf" stroke-width="1.2" stroke-linejoin="round"/></svg>
<svg style="position:absolute;left:1349px;top:916px;" width="10" height="18" viewBox="0 0 10 18"><path d="M5 1 V15" stroke="#444" stroke-width="1.4"/><polyline points="2,12 5,15.5 8,12" fill="none" stroke="#444" stroke-width="1.4"/></svg>
<svg style="position:absolute;left:105px;top:960px;" width="14" height="14" viewBox="0 0 14 14"><circle cx="5.5" cy="5.5" r="4" fill="none" stroke="#444" stroke-width="1.7"/><line x1="8.5" y1="8.5" x2="12.5" y2="12.5" stroke="#444" stroke-width="1.9"/></svg>
<svg style="position:absolute;left:309px;top:960px;" width="14" height="14" viewBox="0 0 14 14"><circle cx="5.5" cy="5.5" r="4" fill="none" stroke="#444" stroke-width="1.7"/><line x1="8.5" y1="8.5" x2="12.5" y2="12.5" stroke="#444" stroke-width="1.9"/></svg>
<svg style="position:absolute;left:825px;top:960px;" width="14" height="14" viewBox="0 0 14 14"><circle cx="5.5" cy="5.5" r="4" fill="none" stroke="#444" stroke-width="1.7"/><line x1="8.5" y1="8.5" x2="12.5" y2="12.5" stroke="#444" stroke-width="1.9"/></svg>
<svg style="position:absolute;left:1143px;top:960px;" width="14" height="14" viewBox="0 0 14 14"><circle cx="5.5" cy="5.5" r="4" fill="none" stroke="#444" stroke-width="1.7"/><line x1="8.5" y1="8.5" x2="12.5" y2="12.5" stroke="#444" stroke-width="1.9"/></svg>
<svg style="position:absolute;left:1336px;top:957px;" width="22" height="22" viewBox="0 0 22 22">
<rect x="1.5" y="3.5" width="19" height="16" rx="2.5" fill="none" stroke="#777" stroke-width="1.3"/>
<path d="M1.5 7.5 H20.5 M6 1.5 V5 M16 1.5 V5" stroke="#777" stroke-width="1.3"/>
<path d="M5 11 h2 M9 11 h2 M13 11 h2 M17 11 h1 M5 15 h2 M9 15 h2 M13 15 h2 M17 15 h1" stroke="#777" stroke-width="1.6"/>
</svg>
<div style="position:absolute;left:104px;top:1002px;width:42px;height:42px;border-radius:50%;background:#d3d3d3;"></div>
<svg style="position:absolute;left:112px;top:1009px;" width="28" height="26" viewBox="0 0 28 26"><path d="M2 23.3 H26.5 M3.8 23 V1.8 H15.8 V23 M15.8 10.8 H24.4 V23 M6.6 6 H13 M6.6 10 H13 M6.6 14 H13 M6.6 18 H13 M18.8 14.5 H21.5 M18.8 18.5 H21.5" fill="none" stroke="#fff" stroke-width="1.4"/></svg>
<div class="t" style="left:156px;top:1013.97px;font-size:14.8px;color:#6d67cf;font-weight:normal;">392196</div>
<div class="t" style="left:317px;top:1014.73px;font-size:14.5px;color:#6d67cf;font-weight:normal;">All.Hcare(Dist)Ltd</div>
<div class="t" style="left:649px;top:1015.03px;font-size:14.5px;color:#555;font-weight:normal;">Phone Call</div>
<div class="t" style="left:825px;top:1015.03px;font-size:14.5px;color:#555;font-weight:normal;">Technical Documentation</div>
<div class="t" style="left:1143px;top:1005.13px;font-size:14.5px;color:#555;font-weight:normal;">14 February, 2026</div>
<div class="t" style="left:1143px;top:1024.93px;font-size:14.5px;color:#555;font-weight:normal;">08:00 AM</div>
<div class="t" style="left:1378px;top:1015.03px;font-size:14.5px;color:#555;font-weight:normal;">Ajay Gupta</div>
<svg style="position:absolute;left:1830px;top:1012px;" width="10" height="22" viewBox="0 0 10 22"><circle cx="5" cy="4" r="2.3" fill="#6d67cf"/><circle cx="5" cy="11" r="2.3" fill="#6d67cf"/><circle cx="5" cy="18" r="2.3" fill="#6d67cf"/></svg>
<div style="position:absolute;left:104px;top:1061px;width:42px;height:42px;border-radius:50%;background:#d3d3d3;"></div>
<svg style="position:absolute;left:112px;top:1068px;" width="28" height="26" viewBox="0 0 28 26"><path d="M2 23.3 H26.5 M3.8 23 V1.8 H15.8 V23 M15.8 10.8 H24.4 V23 M6.6 6 H13 M6.6 10 H13 M6.6 14 H13 M6.6 18 H13 M18.8 14.5 H21.5 M18.8 18.5 H21.5" fill="none" stroke="#fff" stroke-width="1.4"/></svg>
<div class="t" style="left:156px;top:1072.97px;font-size:14.8px;color:#6d67cf;font-weight:normal;">56577</div>
<div class="t" style="left:317px;top:1073.73px;font-size:14.5px;color:#6d67cf;font-weight:normal;letter-spacing:-0.28px;">BRITANNIA PHARMACIES</div>
<div class="t" style="left:649px;top:1073.73px;font-size:14.5px;color:#555;font-weight:normal;">Appointment</div>
<div class="t" style="left:825px;top:1073.73px;font-size:14.5px;color:#555;font-weight:normal;">add new</div>
<div class="t" style="left:1143px;top:1064.73px;font-size:14.5px;color:#555;font-weight:normal;">12 February, 2026</div>
<div class="t" style="left:1378px;top:1073.73px;font-size:14.5px;color:#555;font-weight:normal;">Ajay Gupta + 2 Others</div>
<div class="t" style="left:1658px;top:1073.73px;font-size:14.5px;color:#555;font-weight:normal;">Open</div>
<svg style="position:absolute;left:1830px;top:1070px;" width="10" height="22" viewBox="0 0 10 22"><circle cx="5" cy="5" r="2.3" fill="#6d67cf"/><circle cx="5" cy="12" r="2.3" fill="#6d67cf"/></svg>
<div style="position:absolute;left:60px;top:61px;width:22px;height:1019px;background:linear-gradient(90deg, rgba(0,0,0,0.045), rgba(0,0,0,0.018) 12px, rgba(0,0,0,0) 22px);"></div>
<div style="position:absolute;left:1531px;top:945px;width:203px;height:124px;background:#fff;box-shadow:0 1px 4px rgba(0,0,0,0.18);"></div>
<div style="position:absolute;left:1526px;top:1052px;width:12px;height:12px;background:#fff;transform:rotate(45deg);box-shadow:-1px 1px 2px rgba(0,0,0,0.10);"></div>
<div style="position:absolute;left:1532px;top:1048px;width:12px;height:20px;background:#fff;"></div>
<div class="t" style="left:1550px;top:964.90px;font-size:14.3px;color:#555;font-weight:normal;">1. Ajay Gupta</div>
<div class="t" style="left:1550px;top:987.90px;font-size:14.3px;color:#555;font-weight:normal;">2. USer CSV</div>
<div class="t" style="left:1550px;top:1010.90px;font-size:14.3px;color:#555;font-weight:normal;">3. Love Chauhan, incentX</div>
<div class="t" style="left:1550px;top:1033.90px;font-size:14.3px;color:#555;font-weight:normal;">4.</div>
<div style="position:absolute;left:1905px;top:61px;width:15px;height:1019px;background:#f9f9f9;"></div>
<svg style="position:absolute;left:1905px;top:60px;" width="15" height="16" viewBox="0 0 15 16"><polygon points="3.8,11 11.2,11 7.5,5.6" fill="#888" stroke="#888" stroke-width="1.3" stroke-linejoin="round"/></svg>
<div style="position:absolute;left:1908px;top:78px;width:9px;height:808px;background:#888;border-radius:4.5px;"></div>
<svg style="position:absolute;left:1905px;top:1064px;" width="15" height="16" viewBox="0 0 15 16"><polygon points="3.8,5.3 11.2,5.3 7.5,10.7" fill="#888" stroke="#888" stroke-width="1.3" stroke-linejoin="round"/></svg>
<div style="position:absolute;left:988px;top:10px;width:449px;height:50px;background:#fff;"></div>
<div class="t" style="right:850.5px;text-align:right;top:17.08px;font-size:12.6px;color:#808080;font-weight:normal;letter-spacing:0.15px;">Distribution</div>
<div class="t" style="right:850.5px;text-align:right;top:30.19px;font-size:12.3px;color:#808080;font-weight:normal;">Channel(s)</div>
<div style="position:absolute;left:1080px;top:48px;width:345px;height:324px;background:#fff;border-left:1px solid #d6d6d6;border-right:1px solid #e0e0e0;box-sizing:border-box;box-shadow:0 3px 12px rgba(0,0,0,0.22);"></div>
<div style="position:absolute;left:1080px;top:13px;width:345px;height:36px;background:#fff;border:1px solid #6d67cf;box-sizing:border-box;"></div>
<div style="position:absolute;left:1085px;top:18px;width:101px;height:25px;background:#dcdcdc;"></div>
<div class="t" style="left:1091px;top:22.75px;font-size:13px;color:#333;font-weight:normal;">1001 - DS-ADD</div>
<div style="position:absolute;left:1190px;top:18px;width:56px;height:25px;background:#21b1c5;"></div>
<div class="t" style="left:1196px;top:22.87px;font-size:13.5px;color:#fff;font-weight:bold;">4 more</div>
<svg style="position:absolute;left:1398px;top:26px;" width="16" height="10" viewBox="0 0 16 10"><polyline points="1.5,1.5 8,8 14.5,1.5" fill="none" stroke="#999" stroke-width="2"/></svg>
<div style="position:absolute;left:1092px;top:61px;width:20px;height:20px;background:#fff;border:1px solid #cfcfcf;border-radius:3px;box-sizing:border-box;"></div>
<svg style="position:absolute;left:1092px;top:61px;" width="20" height="20" viewBox="0 0 20 20"><polyline points="3.8,9.5 8.3,14 16.2,6" fill="none" stroke="#6d67cf" stroke-width="1.9"/></svg>
<div class="t" style="left:1122px;top:63.99px;font-size:13.6px;color:#333;font-weight:normal;">Select All</div>
<div style="position:absolute;left:1082px;top:97px;width:340px;height:1px;background:#dadada;"></div>
<div style="position:absolute;left:1092px;top:111.75px;width:20px;height:20px;background:#fff;border:1px solid #cfcfcf;border-radius:3px;box-sizing:border-box;"></div>
<svg style="position:absolute;left:1092px;top:111.75px;" width="20" height="20" viewBox="0 0 20 20"><polyline points="3.8,9.5 8.3,14 16.2,6" fill="none" stroke="#6d67cf" stroke-width="1.9"/></svg>
<div class="t" style="left:1123px;top:112.74px;font-size:13.6px;color:#333;font-weight:normal;letter-spacing:-0.35px;">1001 - DS-ADD</div>
<div style="position:absolute;left:1092px;top:150.75px;width:20px;height:20px;background:#fff;border:1px solid #cfcfcf;border-radius:3px;box-sizing:border-box;"></div>
<svg style="position:absolute;left:1092px;top:150.75px;" width="20" height="20" viewBox="0 0 20 20"><polyline points="3.8,9.5 8.3,14 16.2,6" fill="none" stroke="#6d67cf" stroke-width="1.9"/></svg>
<div class="t" style="left:1123px;top:151.74px;font-size:13.6px;color:#333;font-weight:normal;letter-spacing:0.27px;">35 - DD 12437634789845790659056</div>
<div style="position:absolute;left:1092px;top:189.75px;width:20px;height:20px;background:#fff;border:1px solid #cfcfcf;border-radius:3px;box-sizing:border-box;"></div>
<svg style="position:absolute;left:1092px;top:189.75px;" width="20" height="20" viewBox="0 0 20 20"><polyline points="3.8,9.5 8.3,14 16.2,6" fill="none" stroke="#6d67cf" stroke-width="1.9"/></svg>
<div class="t" style="left:1123px;top:190.74px;font-size:13.6px;color:#333;font-weight:normal;letter-spacing:0px;">test - BOLD</div>
<div style="position:absolute;left:1092px;top:228.75px;width:20px;height:20px;background:#fff;border:1px solid #cfcfcf;border-radius:3px;box-sizing:border-box;"></div>
<svg style="position:absolute;left:1092px;top:228.75px;" width="20" height="20" viewBox="0 0 20 20"><polyline points="3.8,9.5 8.3,14 16.2,6" fill="none" stroke="#6d67cf" stroke-width="1.9"/></svg>
<div class="t" style="left:1123px;top:229.74px;font-size:13.6px;color:#333;font-weight:normal;letter-spacing:0px;">code - Issue</div>
<div style="position:absolute;left:1092px;top:267.75px;width:20px;height:20px;background:#fff;border:1px solid #cfcfcf;border-radius:3px;box-sizing:border-box;"></div>
<svg style="position:absolute;left:1092px;top:267.75px;" width="20" height="20" viewBox="0 0 20 20"><polyline points="3.8,9.5 8.3,14 16.2,6" fill="none" stroke="#6d67cf" stroke-width="1.9"/></svg>
<div class="t" style="left:1123px;top:268.74px;font-size:13.6px;color:#333;font-weight:normal;letter-spacing:-0.3px;">0111 - Specif Feature</div>
<div style="position:absolute;left:1153px;top:317px;width:100px;height:36px;background:#fff;border:1px solid #d8d8d8;box-sizing:border-box;"></div>
<div class="t" style="left:603px;width:1200px;text-align:center;top:327.99px;font-size:13.6px;color:#333;font-weight:normal;">OK</div>
<div style="position:absolute;left:1258px;top:317px;width:100px;height:36px;background:#fff;border:1px solid #d8d8d8;box-sizing:border-box;"></div>
<div class="t" style="left:708px;width:1200px;text-align:center;top:327.99px;font-size:13.6px;color:#333;font-weight:normal;">Cancel</div>
<div style="position:absolute;left:984px;top:6px;width:458px;height:370px;border:4px solid #ff0000;border-radius:4px;box-sizing:border-box;box-shadow:0 1px 1.5px rgba(0,0,0,0.45), inset 0 1px 1px rgba(0,0,0,0.3);"></div>
</body></html>
